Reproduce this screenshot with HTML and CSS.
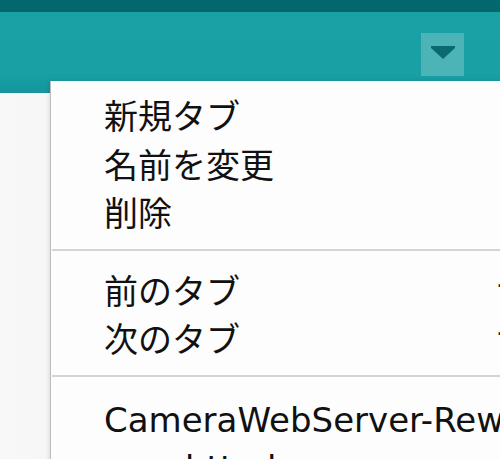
FILE: index.html
```html
<!DOCTYPE html>
<html lang="ja">
<head>
    <meta charset="UTF-8">
    <meta name="viewport" content="width=device-width, initial-scale=1.0">
    <title>タブメニュー</title>
    <link rel="stylesheet" href="styles.css">
</head>
<body>
    <div class="title-strip"></div>
    <header class="toolbar">
        <button class="tab-menu-btn" aria-label="タブメニュー">
            <svg width="24" height="13" viewBox="0 0 24 13">
                <path d="M0 0 H24 V2 L12 13 L0 2 Z" fill="#0b6a70"/>
            </svg>
        </button>
    </header>
    <main class="editor"></main>

    <!-- ドロップダウンメニュー -->
    <ul class="tab-menu">
        <li class="menu-item"><span class="label">新規タブ</span></li>
        <li class="menu-item"><span class="label">名前を変更</span></li>
        <li class="menu-item"><span class="label">削除</span></li>
        <li class="separator"></li>
        <li class="menu-item"><span class="label">前のタブ</span><span class="shortcut">⌥⌘←</span></li>
        <li class="menu-item"><span class="label">次のタブ</span><span class="shortcut">⌥⌘→</span></li>
        <li class="separator"></li>
        <li class="menu-item file"><span class="label">CameraWebServer-Rewrite</span></li>
        <li class="menu-item file"><span class="label">app_httpd.cpp</span></li>
    </ul>
</body>
</html>
```

FILE: styles.css
```css
html, body {
    height: 100%;
}
body {
    margin: 0;
    overflow: hidden;
    display: flex;
    flex-direction: column;
    font-family: "DejaVu Sans", "Noto Sans CJK JP", sans-serif;
    background: #f2f2f2;
}
.title-strip {
    height: 12px;
    background-color: #03676e;
}
.toolbar {
    height: 81px;
    display: flex;
    justify-content: flex-end;
    align-items: center;
    padding-right: 36px;
    background: linear-gradient(to bottom, #1aa1a5 0%, #18a0a4 75%, #14959b 100%);
}
.tab-menu-btn {
    width: 43px;
    height: 43px;
    margin-top: 4px;
    padding: 0;
    border: none;
    background-color: #4cb4b7;
    display: flex;
    align-items: center;
    justify-content: center;
    cursor: pointer;
}
.tab-menu-btn svg {
    margin-top: -4px;
}
.editor {
    flex: 1;
    background: linear-gradient(to right, #f8f8f8 0%, #ececec 70%, #e2e2e2 100%);
}
.tab-menu {
    position: absolute;
    left: 50px;
    top: 81px;
    width: 620px;
    margin: 0;
    padding: 12px 0 0 0;
    list-style: none;
    background-color: #fdfdfd;
    border-left: 1px solid #bcbcbc;
    box-shadow: -2px 0 3px rgba(0, 0, 0, 0.08);
}
.menu-item {
    display: flex;
    height: 48.5px;
    line-height: 48.5px;
    padding-left: 53px;
    font-size: 34px;
    color: #111;
    white-space: nowrap;
}
.menu-item.file {
    line-height: 52px;
}
.menu-item .label {
    width: 392px;
    flex: none;
}
.shortcut {
    color: #222;
}
.separator {
    height: 2px;
    margin: 10px 0 17px 1px;
    background-color: #d4d4d4;
}
```
